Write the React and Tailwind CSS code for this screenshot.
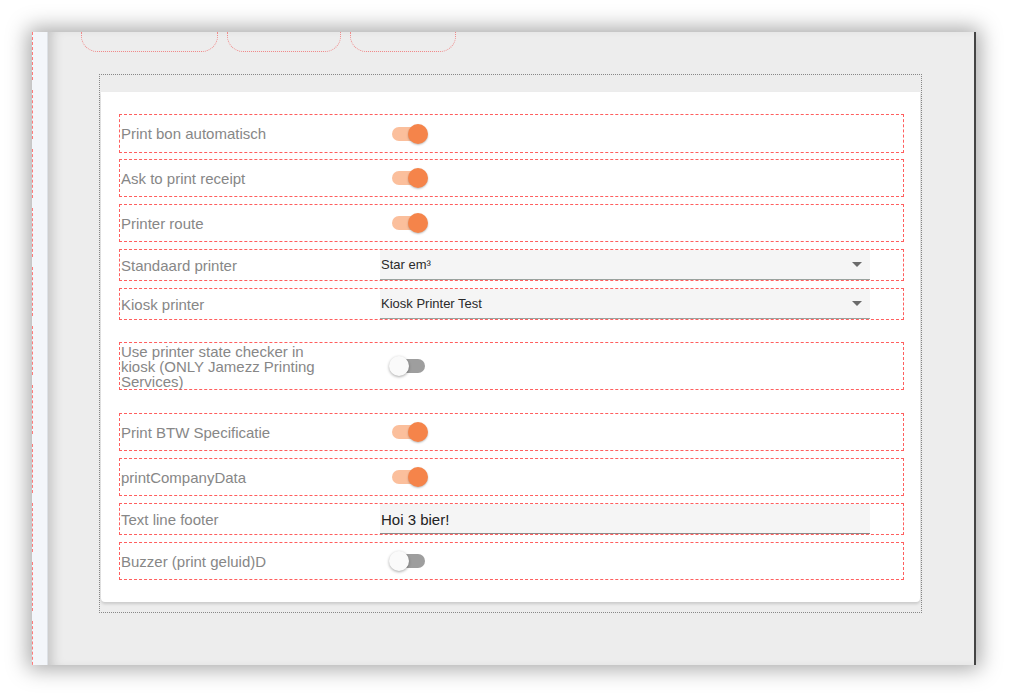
import React from "react";

const font = { fontFamily: "'Liberation Sans', Arial, sans-serif" };

function Toggle({ on }) {
  if (on) {
    return (
      <div className="relative w-[38px] h-[22px] ml-[12px]">
        <div className="absolute left-[0px] top-[4px] w-[34px] h-[14px] rounded-full bg-[#fbbf9c]" />
        <div className="absolute left-[16px] top-[1px] w-[20px] h-[20px] rounded-full bg-[#f5844a] shadow-[0_1px_2px_rgba(0,0,0,0.25)]" />
      </div>
    );
  }
  return (
    <div className="relative w-[38px] h-[22px] ml-[9px]">
      <div className="absolute left-[6px] top-[4px] w-[30px] h-[14px] rounded-full bg-[#9e9e9e]" />
      <div className="absolute left-[0px] top-[1px] w-[20px] h-[20px] rounded-full bg-[#fafafa] shadow-[0_1px_3px_rgba(0,0,0,0.35)]" />
    </div>
  );
}

function Row({ label, cls, children }) {
  return (
    <div className={cls}>
      <div className="w-[260px] shrink-0 pl-[1px] text-[15px] text-[#878787] leading-[15px]">
        {label}
      </div>
      {children}
    </div>
  );
}

function Select({ value }) {
  return (
    <div className="w-[490px] h-[30px] bg-[#f5f5f5] border-b border-[#9aa39f] flex items-center justify-between pl-[1px] pr-[8px]">
      <span className="text-[13px] text-[#2a2a2a]">{value}</span>
      <svg width="10" height="5" viewBox="0 0 10 5">
        <path d="M0 0 L10 0 L5 5 Z" fill="#6b6b6b" />
      </svg>
    </div>
  );
}

export default function App() {
  const sideSegs = [0, 1, 2, 3, 4, 5, 6, 7, 8, 9, 10];
  return (
    <div className="w-[1009px] h-[697px] bg-white pt-[32px] pl-[32px] overflow-hidden" style={font}>
      <div className="w-[944px] h-[633px] flex shadow-[0_0_20px_4px_rgba(0,0,0,0.35)]">
        {/* left strip */}
        <div className="w-[16px] h-full bg-[#f3f6fa] border-r border-[#dde1e6] flex flex-col gap-[10px] overflow-hidden">
          <div className="h-[48px] shrink-0 border-l border-dashed border-[#ff7a7a]" />
          {sideSegs.map((i) => (
            <div key={i} className="h-[49px] shrink-0 border-l border-dashed border-[#ff7a7a]" />
          ))}
        </div>
        {/* main */}
        <div className="flex-1 h-full bg-[#ededed] border-r-[2px] border-[#444] shadow-[inset_10px_0_12px_-6px_rgba(0,0,0,0.18)] flex flex-col">
          <div className="flex gap-[9px] pl-[33px]">
            <div className="w-[137px] h-[20px] border border-t-0 border-dotted border-[#f08a8a] rounded-b-[16px]" />
            <div className="w-[114px] h-[20px] border border-t-0 border-dotted border-[#f08a8a] rounded-b-[16px]" />
            <div className="w-[106px] h-[20px] border border-t-0 border-dotted border-[#f08a8a] rounded-b-[16px]" />
          </div>
          <div className="ml-[51px] mt-[22px] w-[823px] h-[539px] border border-dotted border-[#888] pt-[17px] px-[1px]">
            <div className="bg-white rounded-b-[4px] shadow-[0_2px_3px_rgba(0,0,0,0.15)] pt-[22px] pb-[22px] pl-[18px] pr-[16px] flex flex-col">
              <Row label="Print bon automatisch" cls="flex items-center h-[39px] border border-dashed border-[#ff5e5e]">
                <Toggle on />
              </Row>
              <Row label="Ask to print receipt" cls="flex items-center h-[38px] mt-[6px] border border-dashed border-[#ff5e5e]">
                <Toggle on />
              </Row>
              <Row label="Printer route" cls="flex items-center h-[38px] mt-[7px] border border-dashed border-[#ff5e5e]">
                <Toggle on />
              </Row>
              <Row label="Standaard printer" cls="flex items-center h-[32px] mt-[7px] border border-dashed border-[#ff5e5e]">
                <Select value="Star em³" />
              </Row>
              <Row label="Kiosk printer" cls="flex items-center h-[32px] mt-[7px] border border-dashed border-[#ff5e5e]">
                <Select value="Kiosk Printer Test" />
              </Row>
              <Row label={<span className="block w-[215px]">Use printer state checker in kiosk (ONLY Jamezz Printing Services)</span>} cls="flex items-center h-[48px] mt-[22px] border border-dashed border-[#ff5e5e]">
                <Toggle />
              </Row>
              <Row label="Print BTW Specificatie" cls="flex items-center h-[38px] mt-[23px] border border-dashed border-[#ff5e5e]">
                <Toggle on />
              </Row>
              <Row label="printCompanyData" cls="flex items-center h-[38px] mt-[7px] border border-dashed border-[#ff5e5e]">
                <Toggle on />
              </Row>
              <Row label="Text line footer" cls="flex items-center h-[32px] mt-[7px] border border-dashed border-[#ff5e5e]">
                <div className="w-[490px] h-[30px] bg-[#f5f5f5] border-b border-[#8a8a8a] pl-[1px] pt-[4px]">
                  <span className="text-[15px] leading-[18px] text-[#222]">Hoi 3 bier!</span>
                </div>
              </Row>
              <Row label="Buzzer (print geluid)D" cls="flex items-center h-[38px] mt-[7px] border border-dashed border-[#ff5e5e]">
                <Toggle />
              </Row>
            </div>
          </div>
        </div>
      </div>
    </div>
  );
}
